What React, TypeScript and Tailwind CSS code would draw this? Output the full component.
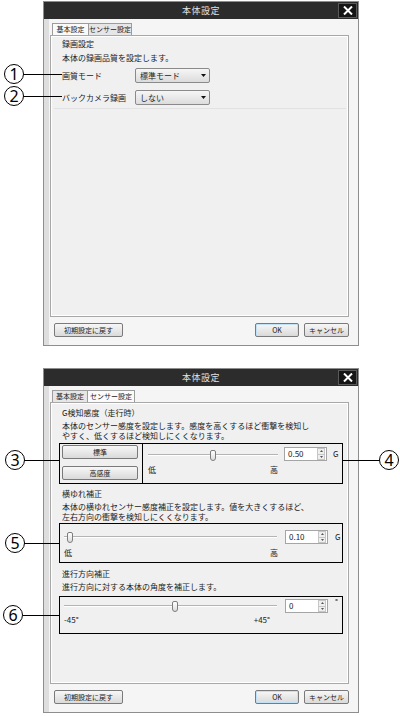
import React from "react";

const FONT = "font-['Noto_Sans_CJK_JP','Noto_Sans',sans-serif]";

function CloseButton() {
  return (
    <div className="absolute right-[1px] top-[1px] w-[19px] h-[15px] bg-[#151515] border border-[#5a5a5a] flex items-center justify-center">
      <svg width="10" height="9" viewBox="0 0 10 9">
        <path d="M1 0.5 L9 8.5 M9 0.5 L1 8.5" stroke="#fff" strokeWidth="2" />
      </svg>
    </div>
  );
}

function Tabs({ active }: { active: 0 | 1 }) {
  const base = "h-full flex items-center justify-center border border-b-0 border-[#9c9c9c] text-[7px] text-[#222]";
  return (
    <div className="h-[12px] flex items-end pl-[2px]">
      <div
        className={
          active === 0
            ? `${base} w-[37px] h-[13px] bg-[#fafafa]`
            : `${base} w-[36px] h-[11px] bg-[#e6e6e6]`
        }
      >
        基本設定
      </div>
      <div
        className={
          active === 1
            ? `${base} w-[47px] h-[13px] bg-[#fafafa] border-l-0`
            : `${base} w-[43px] h-[11px] bg-[#e6e6e6] border-l-0`
        }
      >
        センサー設定
      </div>
    </div>
  );
}

function Btn({ children, className = "" }: { children: React.ReactNode; className?: string }) {
  return (
    <div
      className={`h-[14px] flex items-center justify-center rounded-[2px] border border-[#7a7a7a] bg-gradient-to-b from-[#f7f7f7] to-[#dadada] text-[7px] text-[#222] ${className}`}
    >
      {children}
    </div>
  );
}

function Dialog({ active, children }: { active: 0 | 1; children: React.ReactNode }) {
  return (
    <div className="w-[316px] h-[345px] ml-[43px] border border-[#8e8e8e] bg-[#e4e4e4] flex flex-col">
      <div className="relative h-[17px] bg-[#2c2c2c] flex items-center justify-center">
        <span className="text-[9px] text-[#e2e2e2] tracking-[0.5px]">本体設定</span>
        <CloseButton />
      </div>
      <div className="flex-1 bg-[#f5f5f5] pl-[1px] pr-[9px] pt-[4px] border-l-[5px] border-l-[#dedede]">
        <Tabs active={active} />
        <div className="h-[282px] border border-[#a8a8a8] bg-[#f0f0f0] shadow-[inset_0_0_0_1px_#ffffff]">
          {children}
        </div>
        <div className="flex items-center mt-[6px]">
          <Btn className="w-[69px] ml-[4px]">初期設定に戻す</Btn>
          <div className="flex-1" />
          <Btn className="w-[44px] border-[#3d84bb] shadow-[inset_0_0_0_1px_#bfe2f8]">OK</Btn>
          <Btn className="w-[45px] ml-[5px]">キャンセル</Btn>
        </div>
      </div>
    </div>
  );
}

function Select({ value }: { value: string }) {
  return (
    <div className="w-[75px] h-[15px] flex items-center border border-[#8a8a8a] rounded-[2px] bg-gradient-to-b from-[#f6f6f6] to-[#dcdcdc] pl-[4px]">
      <span className="flex-1 text-[8px] text-[#222]">{value}</span>
      <div className="w-[9px] h-[11px] mr-[1px] flex items-center justify-center">
        <svg width="5" height="3" viewBox="0 0 5 3">
          <path d="M0 0 L5 0 L2.5 3 Z" fill="#111" />
        </svg>
      </div>
    </div>
  );
}

function Thumb() {
  return (
    <div className="absolute top-[-5px] w-[6px] h-[11px] -ml-[3px] rounded-[2px] rounded-b-[3px] border border-[#7d7d7d] bg-gradient-to-b from-[#ffffff] to-[#dcdcdc]" />
  );
}

function Slider({ thumbClass }: { thumbClass: string }) {
  return (
    <div className="relative h-[2px] border-t border-[#b4b4b4] border-b border-b-[#ffffff]">
      <div className={`absolute top-0 ${thumbClass}`}>
        <Thumb />
      </div>
    </div>
  );
}

function Spin({ value, className = "" }: { value: string; className?: string }) {
  return (
    <div className={`w-[43px] h-[14px] flex items-center border border-[#a5a5a5] bg-white ${className}`}>
      <span className="flex-1 pl-[3px] text-[8px] text-[#222]">{value}</span>
      <div className="w-[8px] h-[12px] mr-[1px] flex flex-col border border-[#c6c6c6] bg-[#efefef]">
        <div className="flex-1 flex items-center justify-center border-b border-[#c6c6c6]">
          <svg width="3" height="2" viewBox="0 0 3 2"><path d="M0 2 L3 2 L1.5 0 Z" fill="#555" /></svg>
        </div>
        <div className="flex-1 flex items-center justify-center">
          <svg width="3" height="2" viewBox="0 0 3 2"><path d="M0 0 L3 0 L1.5 2 Z" fill="#555" /></svg>
        </div>
      </div>
    </div>
  );
}

function Badge({ n, className }: { n: string; className: string }) {
  return (
    <div
      className={`absolute w-[20px] h-[20px] rounded-full border border-black bg-white flex items-center justify-center text-[16px] leading-none text-black font-['Noto_Sans',sans-serif] ${className}`}
    >
      {n}
    </div>
  );
}

function Basic() {
  return (
    <div className="pl-[11px] pt-[3px] text-[8px] leading-[10px] text-[#222]">
      <div>録画設定</div>
      <div className="mt-[4px]">本体の録画品質を設定します。</div>
      <div className="flex items-center mt-[5px]">
        <div className="w-[73px]">画質モード</div>
        <Select value="標準モード" />
      </div>
      <div className="flex items-center mt-[7px]">
        <div className="w-[73px]">バックカメラ録画</div>
        <Select value="しない" />
      </div>
      <div className="mt-[3px] mr-[2px] -ml-[8px] h-px bg-[#ffffff] border-t border-[#e2e2e2]" />
    </div>
  );
}

function Sensor() {
  return (
    <div className="pl-[8px] pt-[5px] text-[8px] leading-[10px] text-[#222]">
      <div className="pl-[3px]">G検知感度（走行時）</div>
      <div className="pl-[3px] mt-[3px]">
        本体のセンサー感度を設定します。感度を高くするほど衝撃を検知し
        <br />
        やすく、低くするほど検知しにくくなります。
      </div>
      <div className="mt-[2px] w-[284px] h-[41px] flex border-[1.5px] border-black">
        <div className="w-[83px] flex flex-col gap-[7px] pl-[2px] pt-[1px] border-r-[1.5px] border-black">
          <Btn className="w-[76px]">標準</Btn>
          <Btn className="w-[76px]">高感度</Btn>
        </div>
        <div className="flex-1 flex items-start pl-[5px] pt-[3px]">
          <div className="w-[130px] pt-[7px]">
            <Slider thumbClass="left-[65px]" />
            <div className="flex justify-between mt-[9px]">
              <span>低</span>
              <span>高</span>
            </div>
          </div>
          <Spin value="0.50" className="ml-[6px]" />
          <span className="ml-[6px] mt-[2px]">G</span>
        </div>
      </div>

      <div className="pl-[3px] mt-[5px]">横ゆれ補正</div>
      <div className="pl-[3px] mt-[3px]">
        本体の横ゆれセンサー感度補正を設定します。値を大きくするほど、
        <br />
        左右方向の衝撃を検知しにくくなります。
      </div>
      <div className="mt-[1px] w-[284px] h-[40px] border-[1.5px] border-black pl-[4px] pt-[6px]">
        <div className="flex items-center">
          <div className="w-[213px]">
            <Slider thumbClass="left-[6px]" />
          </div>
          <Spin value="0.10" className="ml-[8px]" />
          <span className="ml-[7px]">G</span>
        </div>
        <div className="w-[214px] flex justify-between mt-[4px]">
          <span>低</span>
          <span>高</span>
        </div>
      </div>

      <div className="pl-[3px] mt-[6px]">進行方向補正</div>
      <div className="pl-[3px] mt-[3px]">進行方向に対する本体の角度を補正します。</div>
      <div className="mt-[4px] w-[284px] h-[38px] border-[1.5px] border-black pl-[4px] pt-[2px]">
        <div className="flex items-center">
          <div className="w-[213px]">
            <Slider thumbClass="left-[111px]" />
          </div>
          <Spin value="0" className="ml-[8px]" />
          <span className="ml-[7px] self-start -mt-[2px]">°</span>
        </div>
        <div className="w-[206px] flex justify-between mt-[2px]">
          <span>-45°</span>
          <span>+45°</span>
        </div>
      </div>
    </div>
  );
}

export default function App() {
  return (
    <div className={`relative w-[400px] h-[716px] bg-white overflow-hidden ${FONT}`}>
      <div className="pt-[1px]">
        <Dialog active={0}>
          <Basic />
        </Dialog>
      </div>
      <div className="mt-[22px]">
        <Dialog active={1}>
          <Sensor />
        </Dialog>
      </div>

      {/* callouts */}
      <div className="absolute left-[23px] top-[74px] w-[39px] h-px bg-black" />
      <Badge n="1" className="left-[4px] top-[64px]" />
      <div className="absolute left-[23px] top-[96px] w-[39px] h-px bg-black" />
      <Badge n="2" className="left-[4px] top-[86px]" />
      <div className="absolute left-[24px] top-[460px] w-[35px] h-px bg-black" />
      <Badge n="3" className="left-[5px] top-[450px]" />
      <div className="absolute left-[342px] top-[460px] w-[38px] h-px bg-black" />
      <Badge n="4" className="left-[379px] top-[450px]" />
      <div className="absolute left-[24px] top-[543px] w-[35px] h-px bg-black" />
      <Badge n="5" className="left-[5px] top-[533px]" />
      <div className="absolute left-[23px] top-[615px] w-[36px] h-px bg-black" />
      <Badge n="6" className="left-[3px] top-[605px]" />
    </div>
  );
}
